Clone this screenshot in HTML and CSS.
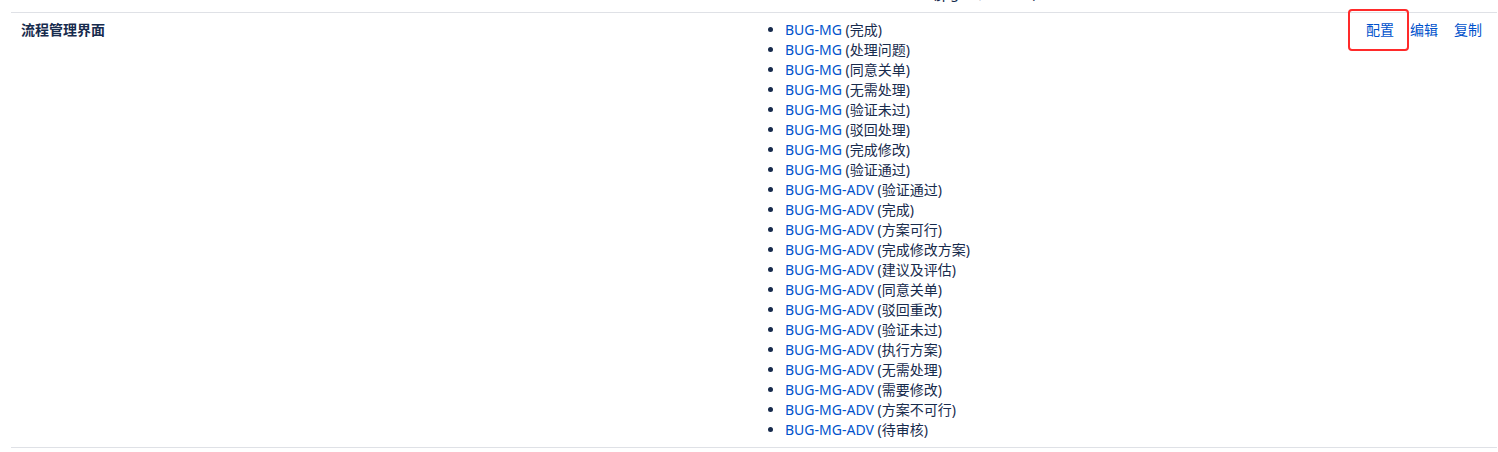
FILE: index.html
```html
<!DOCTYPE html>
<html lang="zh-CN">
<head>
<meta charset="utf-8">
<title>流程管理界面</title>
<link rel="stylesheet" href="styles.css">
</head>
<body>
<div class="page">
  <div class="table">
    <div class="row prev">
      <div class="cell name"></div>
      <div class="cell schemes">
        <ul class="list">
          <li><a href="#">BUG-MG-ADV-TEST-01</a> (Jpg 流程审批单)</li>
        </ul>
      </div>
      <div class="cell actions"></div>
    </div>
    <div class="row">
      <div class="cell name"><strong>流程管理界面</strong></div>
      <div class="cell schemes">
        <ul class="list">
          <li><a href="#">BUG-MG</a> (完成)</li>
          <li><a href="#">BUG-MG</a> (处理问题)</li>
          <li><a href="#">BUG-MG</a> (同意关单)</li>
          <li><a href="#">BUG-MG</a> (无需处理)</li>
          <li><a href="#">BUG-MG</a> (验证未过)</li>
          <li><a href="#">BUG-MG</a> (驳回处理)</li>
          <li><a href="#">BUG-MG</a> (完成修改)</li>
          <li><a href="#">BUG-MG</a> (验证通过)</li>
          <li><a href="#">BUG-MG-ADV</a> (验证通过)</li>
          <li><a href="#">BUG-MG-ADV</a> (完成)</li>
          <li><a href="#">BUG-MG-ADV</a> (方案可行)</li>
          <li><a href="#">BUG-MG-ADV</a> (完成修改方案)</li>
          <li><a href="#">BUG-MG-ADV</a> (建议及评估)</li>
          <li><a href="#">BUG-MG-ADV</a> (同意关单)</li>
          <li><a href="#">BUG-MG-ADV</a> (驳回重改)</li>
          <li><a href="#">BUG-MG-ADV</a> (验证未过)</li>
          <li><a href="#">BUG-MG-ADV</a> (执行方案)</li>
          <li><a href="#">BUG-MG-ADV</a> (无需处理)</li>
          <li><a href="#">BUG-MG-ADV</a> (需要修改)</li>
          <li><a href="#">BUG-MG-ADV</a> (方案不可行)</li>
          <li><a href="#">BUG-MG-ADV</a> (待审核)</li>
        </ul>
      </div>
      <div class="cell actions">
        <a href="#" class="action highlighted">配置</a>
        <a href="#" class="action">编辑</a>
        <a href="#" class="action">复制</a>
      </div>
    </div>
  </div>
</div>
</body>
</html>
```

FILE: styles.css
```css
html, body {
  margin: 0;
  padding: 0;
  background: #ffffff;
}

body {
  font-family: "Segoe UI", "Noto Sans", "Noto Sans CJK SC", sans-serif;
  font-size: 14px;
  line-height: 20px;
  color: #172b4d;
  overflow: hidden;
}

.page {
  padding: 0 1px 0 11px;
  height: 452px;
  overflow: hidden;
}

.table {
  margin-top: -24px;
}

.row {
  display: grid;
  grid-template-columns: 744px 601px 1fr;
  border-bottom: 1px solid #dfe1e6;
}

.cell {
  padding: 7px 10px;
}

.prev .cell {
  padding-bottom: 9px;
}

.name strong {
  font-weight: 700;
  color: #172b4d;
}

.list {
  margin: 0;
  padding: 0 0 0 20px;
  list-style: disc;
}

.list li {
  line-height: 20px;
}

a {
  color: #0052cc;
  text-decoration: none;
}

.actions {
  display: flex;
  align-items: flex-start;
  gap: 16px;
}

.action {
  position: relative;
  white-space: nowrap;
}

.highlighted::after {
  content: "";
  position: absolute;
  left: -18px;
  top: -11px;
  width: 57px;
  height: 38px;
  border: 2px solid #ff2a2a;
  border-radius: 4px;
}
```
